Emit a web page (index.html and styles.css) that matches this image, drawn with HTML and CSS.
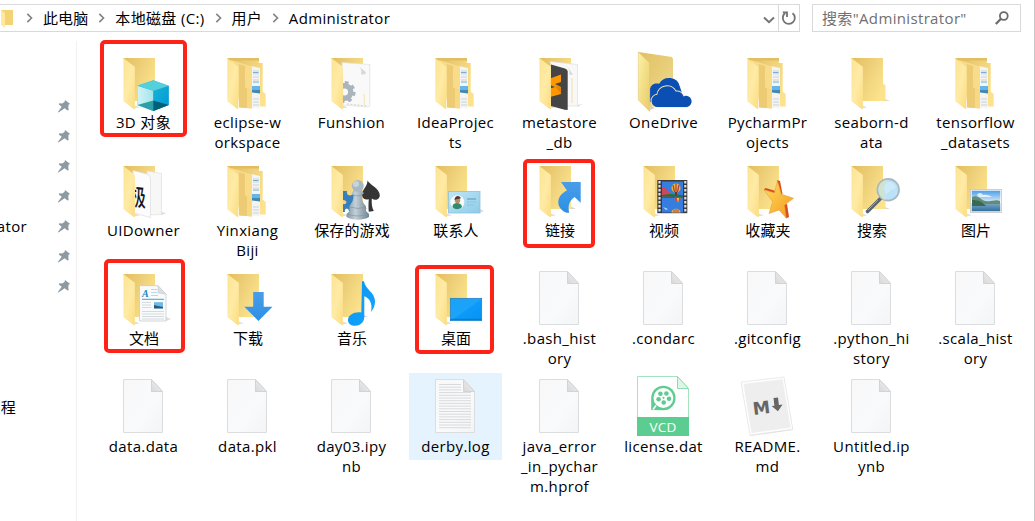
FILE: index.html
```html
<!DOCTYPE html>
<html lang="zh-CN">
<head>
<meta charset="utf-8">
<title>Administrator</title>
<link rel="stylesheet" href="styles.css">
</head>
<body>
<svg class="defs" width="0" height="0" aria-hidden="true">
  <defs>
    <linearGradient id="back" x1="0" y1="0" x2="1" y2="0.6"><stop offset="0" stop-color="#e3bd5c"/><stop offset="0.5" stop-color="#eed07a"/><stop offset="1" stop-color="#fce28c"/></linearGradient>
    <linearGradient id="front" x1="0" y1="0" x2="1" y2="1"><stop offset="0" stop-color="#fde392"/><stop offset="0.5" stop-color="#ffeba6"/><stop offset="1" stop-color="#fbdc80"/></linearGradient>
    <linearGradient id="paper" x1="0" y1="0" x2="1" y2="1"><stop offset="0" stop-color="#f8f8f9"/><stop offset="0.6" stop-color="#f9fafb"/><stop offset="1" stop-color="#f3f4f6"/></linearGradient>
    <linearGradient id="fold" x1="0" y1="1" x2="1" y2="0"><stop offset="0" stop-color="#d8d8da"/><stop offset="1" stop-color="#f4f4f4"/></linearGradient>
    <linearGradient id="blue" x1="0" y1="0" x2="0" y2="1"><stop offset="0" stop-color="#4a9ee8"/><stop offset="1" stop-color="#2c8fe6"/></linearGradient>
    <linearGradient id="screen" x1="0" y1="0" x2="1" y2="1"><stop offset="0" stop-color="#1ba1f8"/><stop offset="0.5" stop-color="#1ca3fa"/><stop offset="0.52" stop-color="#0c9bfa"/><stop offset="1" stop-color="#0593f2"/></linearGradient>
    <linearGradient id="note" x1="0" y1="0" x2="1" y2="1"><stop offset="0" stop-color="#0f93ee"/><stop offset="1" stop-color="#12a6ff"/></linearGradient>
    <linearGradient id="card" x1="0" y1="0" x2="1" y2="1"><stop offset="0" stop-color="#bfe6f6"/><stop offset="1" stop-color="#8fcbe9"/></linearGradient>
    <linearGradient id="star" x1="0" y1="0" x2="1" y2="1"><stop offset="0" stop-color="#ffdd62"/><stop offset="1" stop-color="#f39a1c"/></linearGradient>
    <linearGradient id="steel" x1="0" y1="0" x2="1" y2="0"><stop offset="0" stop-color="#8095a3"/><stop offset="0.4" stop-color="#c3d0d8"/><stop offset="1" stop-color="#6e8291"/></linearGradient>
    <linearGradient id="sky" x1="0" y1="0" x2="0" y2="1"><stop offset="0" stop-color="#4d9fe8"/><stop offset="1" stop-color="#e3f1fb"/></linearGradient>
    <linearGradient id="sea" x1="0" y1="0" x2="0" y2="1"><stop offset="0" stop-color="#7fa9c4"/><stop offset="1" stop-color="#2f6f9e"/></linearGradient>
    <linearGradient id="odFront" x1="0" y1="0" x2="1" y2="1"><stop offset="0" stop-color="#fdf2a5"/><stop offset="1" stop-color="#e9ca69"/></linearGradient>
    <linearGradient id="odBack" x1="0" y1="0" x2="1" y2="1"><stop offset="0" stop-color="#e0bf62"/><stop offset="1" stop-color="#f0dc8f"/></linearGradient>
    <linearGradient id="cubeR" x1="0" y1="0" x2="1" y2="1"><stop offset="0" stop-color="#18b4d3"/><stop offset="1" stop-color="#0096da"/></linearGradient>
    <linearGradient id="cubeL" x1="0" y1="0" x2="1" y2="0"><stop offset="0" stop-color="#d2f3f6"/><stop offset="1" stop-color="#a4e4ea"/></linearGradient>
    <clipPath id="inside"><rect x="38" y="10" width="40" height="54"/></clipPath>
  </defs>

  <symbol id="folder-back" viewBox="0 0 93 64">
    <path d="M38 59l5-.5-5-2z" fill="#dedede"/>
    <path d="M26.5 9H58v43H34z" fill="url(#back)"/>
  </symbol>
  <symbol id="folder-front" viewBox="0 0 93 64">
    <path d="M26.5 9L37.9 18v42h-1.2L26.5 52.3z" fill="url(#front)"/>
  </symbol>
  <symbol id="folder" viewBox="0 0 93 64">
    <path d="M57 52h6l-6-3z" fill="#d8d8d8"/>
    <use href="#folder-back" width="93" height="64"/>
    <use href="#folder-front" width="93" height="64"/>
  </symbol>
  <symbol id="folder-full" viewBox="0 0 93 64">
    <path d="M26.3 9H58v5h3.7v28.5l3 2.5v12.5H45z" fill="url(#back)"/>
    <path d="M26.3 9H58v2.5H30z" fill="#e2bd62"/>
    <path d="M50 17l9 2v40.6l-9-.8z" fill="#f4f4f4"/>
    <path d="M52 22h6M52 25h6M52 28h6M52 31h6M52 50h6M52 53h6M52 56h6" stroke="#c9d3da" stroke-width="1"/>
    <path d="M52 23.5h5.5M52 33h6" stroke="#74add0" stroke-width="1"/>
    <path d="M51 37h8v4h-8z" fill="#63b5ef"/><path d="M51 41h8v3.5l-8-1z" fill="#4587ad"/>
    <path d="M30 11l21 6.5v42l-12-1z" fill="#f8dc89"/>
    <path d="M38 15l6 2v21l2 2v19l-8-.5z" fill="#edcb74"/>
    <path d="M46 38l5 3v18.5l-5-.5z" fill="#f7d984"/>
    <path d="M26.3 9L37.3 18v42h-1L26.3 52.3z" fill="url(#front)"/>
  </symbol>
  <symbol id="file" viewBox="0 0 93 64">
    <path d="M26.5 6.5H54.5L65.5 18.5V59.5H26.5z" fill="url(#paper)" stroke="#dcddde"/>
    <path d="M54.5 6.5L65.5 18.5H54.5z" fill="url(#fold)" stroke="#d3d3d4"/>
  </symbol>

  <symbol id="i-3d" viewBox="0 0 93 64">
    <use href="#folder" width="93" height="64"/>
    <path d="M56.3 31.3L71.7 36.7V56L56.3 62 40.3 56V36.7z" fill="#35bccd"/>
    <path d="M40.3 36.7L56.3 41.7V62L40.3 56z" fill="url(#cubeL)"/>
    <path d="M56.3 41.7L71.7 36.7V56L56.3 62z" fill="url(#cubeR)"/>
    <path d="M56.3 31.3L71.7 36.7 56.3 41.7 40.3 36.7z" fill="#55cfdc"/>
    <path d="M40.3 56L56.3 51.5V62z" fill="#2c9fa9"/>
    <path d="M56.3 51.5L71.7 56 56.3 62z" fill="#035f75"/>
  </symbol>
  <symbol id="i-funshion" viewBox="0 0 93 64">
    <use href="#folder-back" width="93" height="64"/>
    <path d="M37 13.5l27.8 2V57L62 58l-24-2z" fill="#f9f9f9" stroke="#e0e0e0" stroke-width=".7"/>
    <path d="M53 16.500c3 2 4 6 3 9l4-.3 1-2z" fill="#d8d8d8"/>
    <path d="M59.200 45V56" stroke="#f4e3ad"/>
    <path d="M42 55l20 2" stroke="#c8c8c8" stroke-width=".8" stroke-dasharray="2 1.5"/>
    <g clip-path="url(#inside)"><circle cx="39.500" cy="43" r="6.300" fill="none" stroke="#a9b4bc" stroke-width="5.500"/><circle cx="39.500" cy="43" r="9.600" fill="none" stroke="#a9b4bc" stroke-width="3" stroke-dasharray="3.770 3.770"/></g>
    <use href="#folder-front" width="93" height="64"/>
  </symbol>
  <symbol id="i-metastore" viewBox="0 0 93 64">
    <use href="#folder-back" width="93" height="64"/>
    <path d="M37 12.500l27.500 3V57H50z" fill="#f8f8f8" stroke="#dfdfdf" stroke-width=".7"/>
    <path d="M53 15.500c2 3 5 7 3 10l4 .3z" fill="#d5d5d5"/>
    <path d="M59 29v25" stroke="#f0deaa"/><path d="M64.500 56l5-1-5 3z" fill="#ddd"/>
    <path d="M38 15.500l14 4q2.700 .8 2.700 3V61l-3-.3L38 57z" fill="#454545"/>
    <path d="M37 29.500l11-4v7.500l-6 2 6 3v7l-11 3v-8.500l5-1.500-5-2z" fill="#ff9800"/>
    <path d="M42 37l6 8 0-7z" fill="#e28400"/>
    <use href="#folder-front" width="93" height="64"/>
  </symbol>
  <symbol id="i-onedrive" viewBox="0 0 93 64">
    <path d="M21.500 3L55 8l1 2v44L33 58z" fill="url(#odBack)"/>
    <path d="M32.700 61l5-2-4-2z" fill="#ccc"/>
    <path d="M32.700 53V42.500c0-7 5-9 9.500-7.700a11.200 11.200 0 0 1 20.800 3.200l2 6-10 9z" fill="#0b4fb4"/>
    <path d="M21.300 3L32.700 14v48.500L21.300 51z" fill="url(#odFront)" stroke="#dfc36c" stroke-width=".5"/>
    <path d="M41 58a6 6 0 0 1-.7-12.200 9.800 9.800 0 0 1 18.400-3.300 7.500 7.500 0 0 1 7.800 5A5.600 5.600 0 0 1 70 58z" fill="#0b4fb4" stroke="#f4e5ab" stroke-width="2"/>
    <path d="M38 58.500h36v3H38z" fill="#fff"/>
    <path d="M41 58a6 6 0 0 1-.7-12.200 9.800 9.800 0 0 1 18.400-3.300 7.500 7.500 0 0 1 7.800 5A5.600 5.600 0 1 1 70 58z" fill="#0b4fb4"/>
  </symbol>
  <symbol id="i-empty" viewBox="0 0 93 64">
    <path d="M60 52h5l-5-2z" fill="#d8d8d8"/>
    <path d="M26.500 9H58v25.500l2.500 2V52H34z" fill="url(#back)"/>
    <path d="M38 59l4-.5-4-2z" fill="#dedede"/>
    <use href="#folder-front" width="93" height="64"/>
  </symbol>
  <symbol id="i-uidowner" viewBox="0 0 93 64">
    <use href="#folder-back" width="93" height="64"/>
    <path d="M64 58l5-1.500-5-2z" fill="#ddd"/>
    <path d="M50 14l14.500 2.500V57.500L50 58z" fill="#f7f7f8" stroke="#e0e0e0" stroke-width=".7"/>
    <path d="M36 13.500l14 3.500q3.500 1 3.500 5V60.500L37 56z" fill="#fcfcfc" stroke="#dedede" stroke-width=".7"/>
    <g clip-path="url(#inside)"><text transform="translate(33.500 48) skewY(7) scale(.64 1)" font-size="24" font-weight="500" class="folder-glyph">极</text></g>
    <use href="#folder-front" width="93" height="64"/>
  </symbol>
  <symbol id="i-games" viewBox="0 0 93 64">
    <use href="#folder" width="93" height="64"/>
    <path d="M38 34h4c-1 4 3 6 6 3v-3h4v21h-8c0-5-5-4-4 0h-2v-8c4 1 5-4 0-4z" fill="#3880bd"/>
    <path d="M62.500 23.500c2 4 12 8 12.300 14.500.1 4.500-4.500 6.300-8 3.500-.3 5 0 9 2 12.500l-5 .8c-.5-4-.3-9 0-12.500-6 1.500-8-3.500-6-8 2-4 4.500-6 4.700-10.800z" fill="#353535"/>
    <path d="M50 33h6l3 3-2 2c0 6 1 8 4 11v5l3 3v3c-6 3.500-16 3.500-22.500 0v-3l3-3v-5c3-4 4-6 4-11l-2-2z" fill="url(#steel)"/>
    <circle cx="52.800" cy="29" r="6" fill="#a9b9c3"/><circle cx="51" cy="27" r="3" fill="#c8d4db"/>
    <path d="M48 38q5 2 9 0M45 50q8 3 16 0M42 57q11 4 22 0" fill="none" stroke="#8497a3" stroke-width=".7"/>
  </symbol>
  <symbol id="i-contacts" viewBox="0 0 93 64">
    <use href="#folder" width="93" height="64"/>
    <path d="M71 56l4-2-4-2z" fill="#ddd"/>
    <rect x="39.500" y="34.500" width="31.500" height="21.500" fill="url(#card)" stroke="#8dc3df" stroke-width=".8"/>
    <circle cx="48.300" cy="45.300" r="7" fill="#f6fafa"/>
    <path d="M43.500 50c0-3 2-4 4.500-4s4.500 1 5 4c-3 3-7 3-9.500 0z" fill="#2c8c6c"/>
    <circle cx="48.500" cy="43.500" r="2.700" fill="#be8b69"/><path d="M45.500 43c0-5 6-5 6.300-1.500l-3.500.5z" fill="#4c3a34"/>
    <path d="M58 42h9" stroke="#6fafcc" stroke-width="1.500"/><path d="M58 45h9M58 48h7" stroke="#87bfd8" stroke-dasharray="2 .7"/>
  </symbol>
  <symbol id="i-links" viewBox="0 0 93 64">
    <use href="#folder" width="93" height="64"/>
    <path d="M48 25H67.700V45.700L61.500 40c-5 4-7 8-5.300 15.700h-2.400C43 52 42 39 54 33.500z" fill="url(#blue)"/>
  </symbol>
  <symbol id="i-video" viewBox="0 0 93 64">
    <use href="#folder" width="93" height="64"/>
    <rect x="40.300" y="23" width="30" height="33.200" fill="#3b3b3b"/>
    <path d="M42.500 24v32M68.300 24v32" stroke="#e2e2e2" stroke-width="2.200" stroke-dasharray="2.400 1.600"/>
    <rect x="45" y="24.500" width="21" height="15" fill="#367de0"/><rect x="45" y="40.500" width="21" height="15" fill="#367de0"/>
    <path d="M45 31l3-1 3 4 3 2v3.500h-9z" fill="#cf4660"/><path d="M45 38l8-1 13 1v1.500H45z" fill="#19773a"/>
    <circle cx="59" cy="31" r="4.500" fill="#e5b83d"/><path d="M56 28l1.500 7M59 26.500v9M62 28l-1.500 7" stroke="#b63838" stroke-width="1.200"/><path d="M58 35h2v3h-2z" fill="#6b341f"/>
    <path d="M57 40.500h7l-2 4.500h-2z" fill="#d54a31"/><path d="M60 41h2l-1 5z" fill="#eed83f"/>
    <path d="M54.500 55.500c0-5 9-5 9 0z" fill="#e5b83d"/><path d="M57 55.500v-3M59 55.500v-3.500M61 55.500v-3" stroke="#c83d38"/>
    <path d="M46 50l5 2-2 1zM50 46l2 2z" fill="#c9d4ec"/>
  </symbol>
  <symbol id="i-favorites" viewBox="0 0 93 64">
    <use href="#folder" width="93" height="64"/>
    <path d="M56 23.300l3 .7 2.500 13-4 5zM42.700 32.500l2-1.500 10 3-1 3zM62 48l4-1 2 13-3 1.500z" fill="#d94c20"/>
    <path d="M56.500 24L60.500 37.300 72.500 41.300 63.500 48 65.300 61 58 53 48 56.500 51.700 44.700 43 32.800 53.300 35.700z" fill="url(#star)" stroke="#e0942c" stroke-width=".5"/>
  </symbol>
  <symbol id="i-search" viewBox="0 0 93 64">
    <use href="#i-empty" width="93" height="64"/>
    <path d="M55.500 41.500L42.500 54.500" stroke="#59666e" stroke-width="3.600" stroke-linecap="round"/><path d="M53 43L43 53" stroke="#94a0a7"/>
    <circle cx="63.200" cy="32.800" r="10.800" fill="#bce2f9" stroke="#a9b8c1" stroke-width="1.800"/>
    <path d="M54 29c2-5 6-6 9-6-4 5-5 13-2 20-5-1-9-7-7-14z" fill="#cfe3cf"/><path d="M63 25c5 0 7 3 8 6-4 1-8 4-10 7-3-7-2-11 2-13z" fill="#cdeafd"/>
  </symbol>
  <symbol id="i-pictures" viewBox="0 0 93 64">
    <use href="#folder" width="93" height="64"/>
    <rect x="41.500" y="32.500" width="31" height="23" fill="#fff" stroke="#c5c5c5" stroke-width=".8"/>
    <rect x="42.700" y="33.700" width="28.600" height="12.500" fill="url(#sky)"/><rect x="42.700" y="46" width="28.600" height="8.300" fill="url(#sea)"/>
    <path d="M43 40c6-3 8 3 14 4s9-2 14 0v3H43z" fill="#648c70"/><path d="M43 43c7 0 10 2 14 6H43z" fill="#376957"/>
    <path d="M48 38c2-3 5-2 6 0 4-1 7 1 9 2H50z" fill="#f5faff" opacity=".8"/>
  </symbol>
  <symbol id="i-docs" viewBox="0 0 93 64">
    <use href="#folder" width="93" height="64"/>
    <path d="M69 56l5-2-5-2z" fill="#ddd"/>
    <path d="M42.500 20.700H61l8 8.500V56H42.500z" fill="#f8fafb" stroke="#c9cccf" stroke-width=".8"/><path d="M61 20.700l8 8.500-8-1.200z" fill="#dadfe2" stroke="#c4c8ca" stroke-width=".5"/>
    <text x="45" y="32" font-size="10" font-weight="700" font-style="italic" class="doc-letter">A</text>
    <path d="M54 24.500h6M54 27.500h6M54 30.500h7" stroke="#a8cfe3" stroke-width=".8"/><path d="M45 34.300h22" stroke="#3698cf" stroke-width=".9"/>
    <path d="M45 37.500h9M45 40h9M45 42.500h9M45 46.500h22M45 49h22M45 51.500h22M45 54h22" stroke="#cdd2d5" stroke-width=".8"/>
    <rect x="57" y="37.200" width="9" height="6" fill="#6eb9e6"/><path d="M57 40l4 1 5 1v1.500h-9z" fill="#28597a"/>
  </symbol>
  <symbol id="i-downloads" viewBox="0 0 93 64">
    <use href="#folder" width="93" height="64"/>
    <path d="M52.200 27H62.700V41.800H71.500L57.400 56 43.300 41.800H52.200z" fill="url(#blue)"/>
  </symbol>
  <symbol id="i-music" viewBox="0 0 93 64">
    <use href="#folder" width="93" height="64"/>
    <path d="M57 16.300h2c1 8 11 11 11 20 0 4-1 7-4 10.700 2-9-2-14-6.700-15.700V52c0 5-4 8.800-9.300 8.800-4 0-7-2-7-6 0-5 7-8.500 13.300-7.300z" fill="url(#note)"/>
  </symbol>
  <symbol id="i-desktop" viewBox="0 0 93 64">
    <use href="#folder" width="93" height="64"/>
    <rect x="41.300" y="33.300" width="31.400" height="22.400" fill="url(#screen)" stroke="#227db8" stroke-width=".7"/>
    <path d="M41.500 54.300h31" stroke="#0876c9" stroke-width="1"/>
  </symbol>
  <symbol id="i-log" viewBox="0 0 93 64">
    <use href="#file" width="93" height="64"/>
    <path d="M30 11.500h22M30 14.200h22M30 16.900h22M30 19.600h32M30 22.300h32M30 25h32M30 27.700h32M30 30.400h32M30 33.100h32M30 35.800h32M30 38.500h32M30 41.200h32M30 43.900h32M30 46.600h32M30 49.300h32M30 52h32M30 54.700h32" stroke="#d9dadc" stroke-width="1"/>
  </symbol>
  <symbol id="i-vcd" viewBox="0 0 93 64">
    <path d="M20.500 3.500H60.500L71.500 15.500V62.500H20.500z" fill="#fff" stroke="#a5e3c0"/><path d="M60.500 3.500L71.500 15.500H60.500z" fill="#ddf6e8" stroke="#8fdcb1"/>
    <rect x="20" y="44" width="52" height="19" fill="#5ccd90"/>
    <path d="M34.200 37V25a12.200 12.200 0 1 1 12.200 12.200z" fill="#5ccd90"/><circle cx="46.400" cy="25" r="9.900" fill="#fff"/>
    <path d="M36 36.500l3-4" stroke="#fff" stroke-width="1.500"/>
    <g fill="#5ccd90"><circle cx="43.400" cy="20.800" r="2.300"/><circle cx="49.400" cy="20.500" r="2.300"/><circle cx="41.600" cy="26.300" r="2.300"/><circle cx="52" cy="25.800" r="2.300"/><circle cx="46.700" cy="29.500" r="2.300"/><circle cx="46.500" cy="24.800" r="1.100"/></g>
    <text x="46" y="58.500" font-size="13.500" text-anchor="middle" class="badge-text">VCD</text>
  </symbol>
  <symbol id="i-md" viewBox="0 0 93 64">
    <path d="M20.500 10L63 5 72 57 29.500 63z" fill="#cfcfcf" opacity=".6"/>
    <path d="M20 9L63 4 71.700 56.300 29 62.300z" fill="#fdfdfd" stroke="#e2e2e2" stroke-width=".7"/>
    <path d="M22.500 11L61.500 6.300 69.500 54.500 30.500 60z" fill="#eeeeee"/>
    <text transform="translate(32.500 42) rotate(-7)" font-size="17.500" font-weight="700" class="md-letter">M</text>
    <path d="M52.500 25l4.500-.6.900 7.600 3.700-.4-4.700 6.700-6.300-5.300 2.800-.3z" fill="#666"/>
  </symbol>
  <symbol id="pin" viewBox="0 0 14 14">
    <path d="M8 1l5.200 4-1.600.6-.3 2.800.4 2.500-1.100.6-3-2.200L1.400 13.500.9 13l3.800-5.200-2.900-2.300.5-1.200 2.800.3L7.500 3z" fill="#8d9aa2"/>
  </symbol>
  <symbol id="chev" viewBox="0 0 27 16">
    <path d="M11.300 3.800L15.500 8l-4.200 4.200" fill="none" stroke="#858585" stroke-width="1.700"/>
  </symbol>
</svg>

<main class="window">
  <header class="toolbar">
    <div class="address">
      <svg class="crumb-folder" viewBox="0 0 16 18"><path d="M1 0h12v15H4z" fill="#f3d374"/><path d="M1 0l4 3v15L1 15z" fill="#ffe89f"/></svg>
      <svg class="chev"><use href="#chev"/></svg>
      <span class="cjk">此电脑</span>
      <svg class="chev"><use href="#chev"/></svg>
      <span>本地磁盘 (C:)</span>
      <svg class="chev"><use href="#chev"/></svg>
      <span class="cjk">用户</span>
      <svg class="chev"><use href="#chev"/></svg>
      <span>Administrator</span>
      <svg class="drop" viewBox="0 0 12 8"><path d="M1 1.500l5 4.800 5-4.800" fill="none" stroke="#737373" stroke-width="1.900"/></svg>
      <div class="refresh"><svg viewBox="0 0 16 16" width="16" height="16"><path d="M11.500 3.200A6 6 0 1 1 4 3.300" fill="none" stroke="#737373" stroke-width="1.800"/><path d="M1.800 2.500H6V7" fill="none" stroke="#737373" stroke-width="1.800"/></svg></div>
    </div>
    <div class="search">
      <span>搜索"Administrator"</span>
      <svg viewBox="0 0 14 14" width="14" height="14"><circle cx="8.800" cy="5" r="3.900" fill="none" stroke="#6b6b6b" stroke-width="1.800"/><path d="M6 7.800L.8 13" stroke="#6b6b6b" stroke-width="2.300"/></svg>
    </div>
  </header>
  <div class="body">
    <nav class="sidebar">
      <div class="nav-row"><svg class="pin"><use href="#pin"/></svg></div>
      <div class="nav-row"><svg class="pin"><use href="#pin"/></svg></div>
      <div class="nav-row"><svg class="pin"><use href="#pin"/></svg></div>
      <div class="nav-row"><svg class="pin"><use href="#pin"/></svg></div>
      <div class="nav-row"><span class="nav-text">Administrator</span><svg class="pin"><use href="#pin"/></svg></div>
      <div class="nav-row"><svg class="pin"><use href="#pin"/></svg></div>
      <div class="nav-row"><svg class="pin"><use href="#pin"/></svg></div>
      <div class="nav-row nav-late"><span class="nav-text short">流程</span></div>
    </nav>
    <section class="files">
      <div class="item"><svg><use href="#i-3d"/></svg><p>3D 对象</p><i class="mark mark-3d"></i></div>
      <div class="item"><svg><use href="#folder-full"/></svg><p>eclipse-w<br>orkspace</p></div>
      <div class="item"><svg><use href="#i-funshion"/></svg><p>Funshion</p></div>
      <div class="item"><svg><use href="#folder-full"/></svg><p>IdeaProjec<br>ts</p></div>
      <div class="item"><svg><use href="#i-metastore"/></svg><p>metastore<br>_db</p></div>
      <div class="item"><svg><use href="#i-onedrive"/></svg><p>OneDrive</p></div>
      <div class="item"><svg><use href="#folder-full"/></svg><p>PycharmPr<br>ojects</p></div>
      <div class="item"><svg><use href="#i-empty"/></svg><p>seaborn-d<br>ata</p></div>
      <div class="item"><svg><use href="#folder-full"/></svg><p>tensorflow<br>_datasets</p></div>

      <div class="item"><svg><use href="#i-uidowner"/></svg><p>UIDowner</p></div>
      <div class="item"><svg><use href="#folder-full"/></svg><p>Yinxiang<br>Biji</p></div>
      <div class="item"><svg><use href="#i-games"/></svg><p class="cjk">保存的游戏</p></div>
      <div class="item"><svg><use href="#i-contacts"/></svg><p class="cjk">联系人</p></div>
      <div class="item"><svg><use href="#i-links"/></svg><p class="cjk">链接</p><i class="mark mark-links"></i></div>
      <div class="item"><svg><use href="#i-video"/></svg><p class="cjk">视频</p></div>
      <div class="item"><svg><use href="#i-favorites"/></svg><p class="cjk">收藏夹</p></div>
      <div class="item"><svg><use href="#i-search"/></svg><p class="cjk">搜索</p></div>
      <div class="item"><svg><use href="#i-pictures"/></svg><p class="cjk">图片</p></div>

      <div class="item"><svg><use href="#i-docs"/></svg><p class="cjk">文档</p><i class="mark mark-docs"></i></div>
      <div class="item"><svg><use href="#i-downloads"/></svg><p class="cjk">下载</p></div>
      <div class="item"><svg><use href="#i-music"/></svg><p class="cjk">音乐</p></div>
      <div class="item"><svg><use href="#i-desktop"/></svg><p class="cjk">桌面</p><i class="mark mark-desktop"></i></div>
      <div class="item"><svg><use href="#file"/></svg><p>.bash_hist<br>ory</p></div>
      <div class="item"><svg><use href="#file"/></svg><p>.condarc</p></div>
      <div class="item"><svg><use href="#file"/></svg><p>.gitconfig</p></div>
      <div class="item"><svg><use href="#file"/></svg><p>.python_hi<br>story</p></div>
      <div class="item"><svg><use href="#file"/></svg><p>.scala_hist<br>ory</p></div>

      <div class="item"><svg><use href="#file"/></svg><p>data.data</p></div>
      <div class="item"><svg><use href="#file"/></svg><p>data.pkl</p></div>
      <div class="item"><svg><use href="#file"/></svg><p>day03.ipy<br>nb</p></div>
      <div class="item hovered"><svg><use href="#i-log"/></svg><p>derby.log</p></div>
      <div class="item"><svg><use href="#file"/></svg><p>java_error<br>_in_pychar<br>m.hprof</p></div>
      <div class="item"><svg><use href="#i-vcd"/></svg><p>license.dat</p></div>
      <div class="item"><svg><use href="#i-md"/></svg><p>README.<br>md</p></div>
      <div class="item"><svg><use href="#file"/></svg><p>Untitled.ip<br>ynb</p></div>
    </section>
  </div>
</main>
</body>
</html>
```
FILE: styles.css
```css
* { box-sizing: border-box; }
body {
  margin: 0;
  background: #fff;
  color: #000;
  font: 15px/20px "Open Sans", "Noto Sans CJK SC", sans-serif;
  letter-spacing: 0.35px;
}
.defs { position: absolute; }
.window {
  width: 1035px;
  height: 521px;
  overflow: hidden;
  display: flex;
  flex-direction: column;
  border-right: 1px solid #c9c9c9;
}
.toolbar {
  display: flex;
  flex: none;
  gap: 12px;
  height: 41px;
  padding-top: 4px;
}
.address, .search {
  display: flex;
  align-items: center;
  height: 28px;
  border: 1px solid #d9d9d9;
  white-space: nowrap;
}
.address { width: 800px; border-left: 0; }
.address span, .search span { padding-bottom: 1px; }
.cjk { letter-spacing: 0.1px; }
.crumb-folder { width: 16px; height: 18px; margin-top: 1px; }
.chev { width: 27px; height: 16px; flex: none; }
.drop { width: 12px; height: 8px; margin: 3px 3px 0 auto; }
.refresh {
  display: flex;
  align-items: center;
  justify-content: center;
  width: 21px;
  height: 26px;
  border-left: 1px solid #d9d9d9;
}
.search {
  width: 209px;
  padding: 0 11px 0 9px;
  justify-content: space-between;
  color: #707070;
}
.body { display: flex; flex: 1; }
.sidebar {
  width: 77px;
  flex: none;
  padding-top: 50px;
  border-right: 1px solid #f1f1f1;
}
.nav-row {
  display: flex;
  align-items: center;
  height: 30px;
  padding-right: 5px;
}
.nav-text {
  display: flex;
  justify-content: flex-end;
  width: 27px;
  overflow: hidden;
  white-space: nowrap;
}
.nav-text.short { width: 16px; }
.nav-late { margin-top: 91px; }
.pin { width: 14px; height: 14px; margin-left: auto; }
.files {
  display: grid;
  grid-template-columns: repeat(9, 93px);
  grid-auto-rows: 108px;
  column-gap: 11px;
  padding: 8px 0 0 20px;
}
.item { position: relative; height: 87px; }
.item svg { display: block; width: 93px; height: 64px; }
.item p { margin: -1px 0 0; text-align: center; white-space: nowrap; }
.item .cjk { padding-left: 1px; }
.hovered { background: #e5f3ff; }
.mark {
  position: absolute;
  border: 4px solid #ff2216;
  border-radius: 5px;
}
.mark-3d { left: 3px; top: -9px; width: 87px; height: 97px; }
.mark-links { left: 10px; top: 2px; width: 72px; height: 89px; }
.mark-docs { left: 7px; top: -6px; width: 81px; height: 94px; }
.mark-desktop { left: 6px; top: 0; width: 79px; height: 89px; }
.folder-glyph { font-family: "Noto Sans CJK SC", sans-serif; fill: #151515; letter-spacing: 0; }
.doc-letter { font-family: "Liberation Serif", serif; fill: #1c85c2; letter-spacing: 0; }
.badge-text { font-family: "Open Sans", sans-serif; fill: #fff; letter-spacing: 0.3px; }
.md-letter { font-family: "DejaVu Sans", sans-serif; fill: #666; letter-spacing: 0; }
```
